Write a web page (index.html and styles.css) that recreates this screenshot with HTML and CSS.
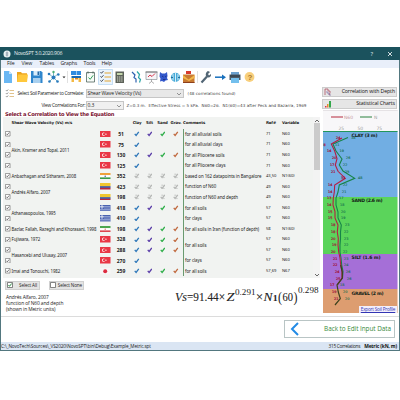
FILE: index.html
```html
<!DOCTYPE html>
<html lang="en">
<head>
<meta charset="utf-8">
<title>NovoSPT</title>
<link rel="stylesheet" href="styles.css">
</head>
<body>
<div class="window">
  <header class="titlebar">
    <svg class="app-icon" viewBox="0 0 10 10"><circle cx="5" cy="5" r="3.5" fill="#e9f3f3"/><path d="M5 2.5v5M3.7 4h2.6M3.7 6h2.6" stroke="#789" stroke-width=".7"/></svg>
    <span class="app-name">NovoSPT 3.0.2020.906</span>
    <span class="help">?</span>
    <svg class="close" viewBox="0 0 6 6"><path d="M1 1l4 4M5 1L1 5" stroke="#fff" stroke-width=".8"/></svg>
  </header>
  <nav class="menu"><span>File</span><span>View</span><span>Tables</span><span>Graphs</span><span>Tools</span><span>Help</span></nav>
  <svg class="toolbar" viewBox="0 0 400 18">
    <g>
      <path d="M4 3h5l3 3v9H4z" fill="#69b7f3"/><path d="M9 3v3h3z" fill="#c6e4fb"/>
      <path d="M17 4h4l1 1.3h5V14H17z" fill="#eda41d"/><path d="M18 6.5h10L27 14H17z" fill="#ffc83c"/>
      <path d="M31 3h10l1.5 1.5V15H31z" fill="#2f86cd"/><path d="M33.500 3h6v4.500h-6z" fill="#d8ecfa"/><path d="M37.500 3.500h1.500V7h-1.500z" fill="#2467a3"/><path d="M33 10h7.500v5H33z" fill="#a9d0ef"/>
      <path d="M53.500 9.500L49 6M53.500 9.500L58 6M53.500 9.500l-4 4M53.500 9.500l4 4M53.500 9.500V4" stroke="#4097a8" stroke-width=".7"/>
      <g fill="#2779bd"><circle cx="53.500" cy="9.500" r="2"/><circle cx="49" cy="6" r="1.300"/><circle cx="58.300" cy="6.500" r="1.300"/><circle cx="49.500" cy="13.500" r="1.300"/><circle cx="57.500" cy="13.500" r="1.300"/></g><circle cx="53.500" cy="4" r="1.200" fill="#4aaf75"/>
      <path d="M62.500 8.500h3l-1.500 1.800z" fill="#222"/>
      <path d="M67.500 3v12M197.500 3v12" stroke="#ccc" stroke-width=".6"/>
      <path d="M71 3h5v4h-5zM76.500 3h4.500v4h-4.500z" fill="#2f8be0"/><path d="M71.500 8h9.500v2h-9.500z" fill="#1769b5"/><path d="M71.500 10h2.500v4h-2.500zM78.500 10h2.500v4h-2.500z" fill="#f4b942"/><path d="M75 10h3v1.500h-3z" fill="#e38b22"/>
      <path d="M86.500 4.500h8V14h-8z" fill="#f7fbf8" stroke="#50665d" stroke-width=".8"/><path d="M88 3.500v2M93 3.500v2" stroke="#50665d"/><path d="M88.500 9.500l1.700 1.800 3-4" fill="none" stroke="#36a35d"/>
      <path d="M98.500 1.500h14v15h-14z" fill="#eaf4fd" stroke="#a5cbed" stroke-width=".6"/><path d="M104.500 5h6.500M104.500 9h6.500M104.500 13h6.500" stroke="#e4a534" stroke-width="1.100"/><path d="M100.500 4l1 1.300L103.500 3M100.500 8.200l1 1.300 2-2.300M100.500 12.300l1 1.300 2-2.300" fill="none" stroke="#3b4251" stroke-width=".9"/>
      <path d="M115.500 3.500h8.500v11.500h-8.500z" fill="#5d625a"/><path d="M117 5h5.500v2H117z" fill="#c5d7ac"/><path d="M117 9h5.500M117 11h5.500M117 13h5.500" stroke="#d7dccd" stroke-width="1" stroke-dasharray="1.300 .8"/>
      <path d="M132 4l3 3-1 2.500 2 1.500v3.500" fill="none" stroke="#2e62b0" stroke-width="1.200"/><path d="M137 3.500l2.500 3-1 3 2 2-1 3" fill="none" stroke="#2fa8a8" stroke-width="1.200"/>
      <path d="M146 4h11v7.500h-11z" fill="#f5f5f7" stroke="#8d949a" stroke-width=".7"/><path d="M145.500 4h12" stroke="#777"/><path d="M148 9l2-2 2 1.500 3-3" fill="none" stroke="#d7374e"/><path d="M151.500 11.500v2l-2.500 2M151.500 13.500l2.500 2" fill="none" stroke="#777" stroke-width=".6"/>
      <path d="M160 4l2 1.500h3l2-1.500.5 4-.5 2 1 2-2.500.5-1.500 1.500-2-1-2 .5.500-3-1-2z" fill="#3358cb"/><path d="M162 8l1.500 1M166.500 8l-1.500 1M163 11.500h2.500" stroke="#172c7c" stroke-width=".8"/>
      <circle cx="175.500" cy="9.300" r="4.600" fill="#45a9d8"/><path d="M175.500 5v9M173 6v6.500M178 6v6.500" stroke="#e5f6fc" stroke-width=".9"/><path d="M171 9.500h2M178 9.500h2" stroke="#226f9b"/>
      <path d="M186 3h5v3h-5z" fill="#d83b2e"/><path d="M183 6.500h11.500V15H183z" fill="#c87a32"/><path d="M183 7l5.500 4.500 6-4.500v3L189 13l-6-3z" fill="#f2b84a"/><path d="M183 14h11.500v1H183z" fill="#8c3f1c"/>
      <path d="M201.500 14.500l5.500-6" stroke="#526675" stroke-width="2.200"/><path d="M210 4l-2 2 1 1.500 2-1.500c.5 3-2 4-4 3s-1.500-5 1-6z" fill="#526675"/>
      <path d="M215 9.200h8" stroke="#1870bd" stroke-width="1.500"/><path d="M222 6.500l4 2.700-4 2.700z" fill="#1870bd"/>
      <path d="M231 4h8v3h-8z" fill="#6ba0ce"/><path d="M229.500 6.500h11V12h-11z" fill="#4d5b68"/><path d="M231 10h8v5h-8z" fill="#73bfed"/><path d="M230 8h10" stroke="#222f3b" stroke-width=".8"/>
      <circle cx="249.500" cy="9" r="4.900" fill="#f8cf7c"/>
    </g>
    <text x="247.500" y="12" class="help-glyph">?</text>
  </svg>

  <div class="filters">
    <div class="filter-rows">
      <div class="filter-row">
        <svg class="list-icon" viewBox="0 0 10 9"><path d="M4.500 1.500H9M4.500 4.500H9M4.500 7.500H9" stroke="#d4a95b" stroke-width=".7"/><path d="M1 1.200l.8.900L3.200.5M1 4.200l.8.900 1.400-1.600M1 7.200l.8.900 1.400-1.600" fill="none" stroke="#555" stroke-width=".6"/></svg>
        <label>Select Soil Parameter to Correlate:</label>
        <div class="select wide"><span>Shear Wave Velocity (Vs)</span><svg viewBox="0 0 6 4"><path d="M1 1l2 2 2-2" fill="none" stroke="#555" stroke-width=".6"/></svg></div>
        <span class="note found">(48 correlations found)</span>
      </div>
      <div class="filter-row">
        <label class="second">View Correlations For:</label>
        <div class="select narrow"><span>0.3</span><svg viewBox="0 0 6 4"><path d="M1 1l2 2 2-2" fill="none" stroke="#555" stroke-width=".6"/></svg></div>
        <span class="note">Z=0.3 m.&nbsp; Effective Stress = 5 kPa.&nbsp; N60=26.&nbsp; N1(60)=43 after Peck and Bazarra, 1969</span>
      </div>
    </div>
    <div class="side-buttons">
      <div class="side-button"><svg viewBox="0 0 8 8"><path d="M1 7V1h3v2h2v2l-1 2" fill="none" stroke="#b05464" stroke-width=".8"/><path d="M3 3v2h2v2h2" fill="none" stroke="#7b6aa0" stroke-width=".7"/></svg><span>Correlation with Depth</span></div>
      <div class="side-button"><svg viewBox="0 0 8 8"><path d="M1 6h1.500v1.500H1z" fill="#d34"/><path d="M3 4h1.500v3.500H3z" fill="#e78b2f"/><path d="M5 1h2v6.500H5z" fill="#35a84c"/></svg><span>Statistical Charts</span></div>
    </div>
  </div>

  <main class="content">
    <section class="left">
      <h1>Select a Correlation to View the Equation</h1>
      <div class="table-wrap">
        <div class="table" id="table"></div>
        <div class="scrollbar">
          <svg viewBox="0 0 6 4"><path d="M1 3l2-2 2 2" fill="none" stroke="#444" stroke-width=".8"/></svg>
          <div class="thumb"></div>
          <svg viewBox="0 0 6 4"><path d="M1 1l2 2 2-2" fill="none" stroke="#444" stroke-width=".8"/></svg>
        </div>
      </div>
      <div class="below">
        <div class="info">
          <div class="buttons">
            <div class="small-button"><svg viewBox="0 0 6 6"><path d="M.5.5h5v5h-5z" fill="#fff" stroke="#555" stroke-width=".7"/><path d="M1.500 3l1 1.300 2.200-2.800" fill="none" stroke="#2d8c46"/></svg><span>Select All</span></div>
            <div class="small-button none"><svg viewBox="0 0 6 6"><path d="M.5.5h5v5h-5z" fill="#fff" stroke="#555" stroke-width=".7"/></svg><span>Select None</span></div>
          </div>
          <p>Andrés Alfaro, 2007<br>function of N60 and depth<br>(shown in Metric units)</p>
        </div>
        <svg class="equation" viewBox="0 0 148 24">
          <g class="eq">
            <text x="0" y="19" textLength="12" class="it" lengthAdjust="spacingAndGlyphs">Vs</text>
            <text x="12" y="19" textLength="38" lengthAdjust="spacingAndGlyphs">=91.44×</text>
            <text x="51.500" y="19" textLength="8" class="it" lengthAdjust="spacingAndGlyphs">Z</text>
            <text x="60" y="13" textLength="20.500" class="sup" lengthAdjust="spacingAndGlyphs">0.291</text>
            <text x="81" y="19" textLength="7" lengthAdjust="spacingAndGlyphs">×</text>
            <text x="88.500" y="19" textLength="9" class="it" lengthAdjust="spacingAndGlyphs">N</text>
            <text x="98" y="19" textLength="4.500" class="one" lengthAdjust="spacingAndGlyphs">1</text>
            <text x="103" y="20" textLength="4" class="paren" lengthAdjust="spacingAndGlyphs">(</text>
            <text x="107.500" y="19" textLength="10.500" lengthAdjust="spacingAndGlyphs">60</text>
            <text x="118.500" y="20" textLength="4" class="paren" lengthAdjust="spacingAndGlyphs">)</text>
            <text x="123" y="11" textLength="20.500" class="sup" lengthAdjust="spacingAndGlyphs">0.298</text>
          </g>
        </svg>
      </div>
    </section>
    <aside class="chart">
      <svg viewBox="323 111 75 203" id="chart">
        <rect x="323" y="111" width="75" height="203" fill="#f8f7f9"/>
        <path d="M323 111.500h74.500" stroke="#d9d3d6" stroke-width=".6"/>
        <path d="M331 118h12" stroke="#b5283c"/><path d="M360 118h12" stroke="#28803c"/>
        <text x="344" y="120" class="leg red-leg">N60</text><text x="374" y="120" class="leg">N</text>
        <text x="338.500" y="130.500" class="leg">25</text><text x="357.500" y="130.500" class="leg">50</text><text x="376.500" y="130.500" class="leg">75</text>
        <rect x="323" y="132" width="74.500" height="66" fill="#71aee3"/>
        <rect x="323" y="198" width="74.500" height="57" fill="#5bd45b"/>
        <rect x="323" y="255" width="74.500" height="35" fill="#a56fd7"/>
        <rect x="323" y="290" width="74.500" height="24" fill="#dd9d70"/>
        <path d="M323 132.500h74.500" stroke="#23965b"/>
        <polyline fill="none" stroke="#168448" stroke-width="1.100" points="348,138.500 333,145 336,152 342,160 339.300,166 343,172 354.700,179.300 339.300,186 338,193 336,199 336,206 338,213 338,219 341.300,226 340.500,233 340.500,240 340,246 340,253 341,259 341.700,266 343,272.500 342.500,279 337.300,286"/>
        <polyline fill="none" stroke="#b51f42" stroke-width="1.100" points="342,139 331.300,145 334.700,152 337,159.700 335.300,166 338,172.300 345.300,179.300 334.700,186 334.300,193 333.300,199.300 333,206 335,212.500 335,219 338,226 337.300,233 338.300,239.500 338,246 338.700,253 340,259 340.700,266 342,272.500 342,279 337.300,286"/>
        <polyline fill="none" stroke="#3c421d" stroke-width="1.200" points="340.700,266 342.300,273 342.300,279 337,286 338.300,293 340.300,299.700 335,306"/>
        <g id="labels"></g>
        <text x="351.500" y="137.500" class="soil" textLength="26">CLAY (3 m)</text>
        <text x="351.500" y="203" class="soil" textLength="31">SAND (2.6 m)</text>
        <text x="351.500" y="260.300" class="soil" textLength="29">SILT (1.6 m)</text>
        <text x="351.500" y="295.500" class="soil" textLength="32">GRAVEL (2 m)</text>
      </svg>
      <a class="export">Export Soil Profile</a>
    </aside>
  </main>

  <footer class="actions">
    <div class="back"><svg viewBox="0 0 10 16"><path d="M8 2L2 8l6 6" fill="none" stroke="#228be6" stroke-width="2"/></svg><span>Back to Edit Input Data</span></div>
  </footer>
  <div class="status"><span class="path">C:\_NovoTech\Sources\_VS2020\NovoSPT\bin\Debug\Example_Metric.spt</span><span class="count">315 Correlations</span><b>Metric (kN, m)</b></div>
</div>
<script src="app.js"></script>
</body>
</html>
```
FILE: styles.css
```css
* { box-sizing: border-box; }
body { margin: 0; width: 400px; height: 400px; background: #fff; padding-top: 47px; overflow: hidden; font-family: "Open Sans", "Liberation Sans", sans-serif; font-size: 5px; line-height: 1; color: #222; white-space: nowrap; }
svg { display: block; flex: none; }
.window { width: 400px; height: 304px; border: solid #52777f; border-width: 0 1px 1px; display: flex; flex-direction: column; background: #fff; }
.titlebar { height: 13px; flex: none; background: #1b525d; color: #e6eff0; display: flex; align-items: center; margin: 0 -1px; padding: 0 7px 0 2px; }
.app-icon { width: 10px; height: 10px; }
.app-name { margin-left: 2px; font-size: 5.2px; letter-spacing: -.28px; flex: 1; }
.help { font-size: 6px; margin-right: 14px; }
.close { width: 6px; height: 6px; }
.menu { height: 8px; flex: none; background: #e9effa; display: flex; align-items: center; padding-left: 6px; font-size: 5.2px; letter-spacing: -.2px; }
.menu span:nth-child(1) { width: 14.500px; }
.menu span:nth-child(2) { width: 18px; }
.menu span:nth-child(3) { width: 21px; }
.menu span:nth-child(4) { width: 23px; }
.menu span:nth-child(5) { width: 18px; }
.toolbar { width: 400px; height: 18px; margin-left: -1px; }
.help-glyph { font: bold 8px "Liberation Sans", sans-serif; fill: #a9772f; }
.filters { height: 25px; flex: none; display: flex; padding: 1px 2px 0 4px; }
.filter-rows { width: 317px; padding-top: .5px; }
.filter-row { height: 12px; display: flex; align-items: center; }
.list-icon { width: 10px; height: 9px; margin-right: 2.500px; }
.filter-row label { width: 68px; flex: none; font-size: 4.8px; letter-spacing: -.3px; }
.filter-row label.second { width: 80.500px; padding-left: 36.500px; letter-spacing: -.24px; }
.select { height: 9px; flex: none; border: 1px solid #c6c6c6; background: #e8e8e8; display: flex; align-items: center; justify-content: space-between; padding: 0 1px; font-size: 5px; letter-spacing: -.11px; }
.select svg { width: 6px; height: 4px; }
.wide { width: 98px; }
.narrow { width: 38px; background: #f0f0f0; }
.note { margin-left: 3px; font: 4.1px "DejaVu Sans", sans-serif; letter-spacing: .01px; color: #444; }
.found { margin-left: 4px; letter-spacing: .05px; }
.side-buttons { width: 75px; display: flex; flex-direction: column; gap: 2px; }
.side-button { height: 10px; border: 1px solid #ccc; background: #e6e6e6; display: flex; align-items: center; justify-content: space-between; padding: 0 1px; font-size: 5.2px; letter-spacing: -.08px; color: #111; }
.side-button svg { width: 8px; height: 8px; }
.content { height: 205px; flex: none; display: flex; }
.left { width: 319px; margin-right: 3px; display: flex; flex-direction: column; }
h1 { margin: 0; height: 6px; padding-left: 4px; font: bold 5.2px/6px "DejaVu Sans", sans-serif; letter-spacing: -.29px; color: #7b1230; }
.table-wrap { height: 161px; margin-left: 2px; display: flex; background: #f1f3f1; }
.table { width: 310px; padding-left: 2px; display: grid; grid-template-columns: 6.500px 88.500px 11px 20px 12px 13px 13px 14px 83px 16px 31px; grid-template-rows: 11.700px repeat(14, 10.550px); font: 4.4px "Noto Sans", sans-serif; color: #222; }
.cell { display: flex; align-items: center; min-width: 0; line-height: 1; }
.cell.head { font: bold 3.9px "DejaVu Sans", sans-serif; letter-spacing: -.13px; }
.cell.author { letter-spacing: -.08px; }
.cell.num { font: bold 5px "Open Sans", sans-serif; justify-content: center; }
.cell.mark { justify-content: center; }
.cell.comment { padding-left: 1px; border-left: 1px solid #6a9a70; letter-spacing: -.05px; }
.cell.small { font-size: 4.1px; }
.cell svg.box { width: 5.500px; height: 5.500px; }
.cell svg.tick { width: 5.500px; height: 5.500px; }
.cell svg.flag { width: 10.500px; height: 6.500px; }
.scrollbar { width: 7px; background: #f3f3f3; display: flex; flex-direction: column; align-items: center; padding: 2px 0 1px; }
.scrollbar svg { width: 6px; height: 4px; }
.thumb { width: 6px; height: 47px; background: #cbcbcb; margin-bottom: auto; }
.below { display: flex; flex: 1; }
.info { width: 167px; flex: none; padding: 2.500px 0 0 4px; }
.buttons { display: flex; gap: 9px; }
.small-button { width: 35px; height: 9px; background: #e4e4e4; border: 1px solid #d0d0d0; display: flex; align-items: center; justify-content: space-between; padding: 0 2px 0 1px; font-size: 4.6px; letter-spacing: -.12px; }
.small-button.none { padding-left: 0; padding-right: 1px; }
.small-button svg { width: 6px; height: 6px; }
.info p { margin: 4.500px 0 0 1px; font-size: 4.9px; line-height: 6.200px; letter-spacing: -.11px; }
.equation { width: 148px; height: 24px; margin: 4px -3px 0 7px; flex: none; }
.eq { font: 11.5px "Liberation Serif", serif; fill: #222; stroke: #222; stroke-width: .1; }
.eq .it { font-style: italic; }
.eq .sup { font-size: 8px; stroke-width: 0; }
.eq .one { font-size: 8px; font-weight: bold; }
.eq .paren { font-size: 14px; stroke-width: 0; }
.chart { width: 75px; height: 203px; margin-top: -1px; position: relative; }
.chart svg { width: 75px; height: 203px; }
.leg { font: 4.5px "DejaVu Sans", sans-serif; fill: #a2a2a2; }
.red-leg { fill: #c99aa2; }
.soil { font: bold 4.6px "DejaVu Sans", sans-serif; fill: #142318; }
.lab { font: 3.4px "DejaVu Sans", sans-serif; }
.lab.l { fill: #a0163c; stroke: #a0163c; stroke-width: .2; }
.lab.r { fill: #146b4c; stroke: #146b4c; stroke-width: .1; }
.export { position: absolute; right: 1px; bottom: 0; width: 38px; height: 7px; background: #f3effb; color: #3235b4; text-decoration: underline; font-size: 4.6px; line-height: 6.500px; text-align: center; letter-spacing: -.18px; }
.actions { height: 26px; flex: none; border-top: 1px solid #dcdcdc; display: flex; justify-content: flex-end; padding: 3px 4px 0 0; }
.back { width: 111px; height: 18px; border: 1px solid #b9c5c5; display: flex; align-items: center; justify-content: space-between; padding: 0 3px 0 5px; color: #378a3b; font-size: 6.4px; letter-spacing: -.05px; }
.back svg { width: 10px; height: 16px; }
.status { height: 8px; flex: none; background: #dae5f3; display: flex; align-items: center; font-size: 4.7px; letter-spacing: -.28px; padding-right: 2px; }
.path { flex: 1; letter-spacing: -.14px; }
.count { margin-right: 4px; }
.status b { color: #111; font-size: 4.9px; letter-spacing: -.15px; }
```
FILE: app.js
```js
const flags = {
  tr: '<rect width="10.500" height="6.500" fill="#e93746"/><circle cx="3.700" cy="3.200" r="1.700" fill="#fff"/><circle cx="4.200" cy="3.200" r="1.300" fill="#e93746"/><circle cx="6" cy="3.200" r=".6" fill="#fff"/>',
  in: '<rect width="10.500" height="2.200" fill="#efa13a"/><rect y="2.200" width="10.500" height="2.200" fill="#fff"/><rect y="4.400" width="10.500" height="2.100" fill="#3b9b48"/><circle cx="5.200" cy="3.200" r=".8" fill="#5560a8"/>',
  co: '<rect width="10.500" height="3.300" fill="#f0c52e"/><rect y="3.200" width="10.500" height="1.700" fill="#34509c"/><rect y="4.800" width="10.500" height="1.700" fill="#b8283c"/>',
  gr: '<rect width="10.500" height="6.500" fill="#4a62b0"/><path d="M4 1.500h6.500M4 3h6.500M0 4.500h10.500M0 6h10.500" stroke="#b9c4e6" stroke-width=".6"/><path d="M0 1.800h4M2 0v3.800" stroke="#fff" stroke-width=".8"/>',
  ir: '<rect width="10.500" height="2.200" fill="#4da650"/><rect y="2.200" width="10.500" height="2.200" fill="#fff"/><rect y="4.400" width="10.500" height="2.100" fill="#dc4650"/><circle cx="5.200" cy="3.200" r=".6" fill="#dc4650"/>',
  jp: '<rect width="10.500" height="6.500" fill="#f8f6f6"/><circle cx="5.200" cy="3.200" r="2" fill="#dd2b40"/>'
};
const rows = [
  ['tr', 51, 'all', '71', 'N60'], ['tr', 75, 'clay', '71', 'N60'], ['tr', 130, 'all', '71', 'N60'],
  ['tr', 125, 'clay', '71', 'N60'], ['in', 352, 'gray', '43,50', 'N1(60)'], ['co', 423, 'gray', '49', 'N60'],
  ['co', 198, 'gray', '49', 'N60'], ['gr', 418, 'all', '57', 'N60'], ['gr', 410, 'clay', '57', 'N60'],
  ['ir', 198, 'all', '58', 'N1(60)'], ['tr', 328, 'all', '57', 'N60'], ['tr', 288, 'all', '57', 'N60'],
  ['tr', 270, 'clay', '57', 'N60'], ['jp', 259, 'all', '57,69', 'N67']
];
const authors = [['Akin, Kramer and Topal, 2011', 4], ['Anbazhagan and Sitharam, 2008', 1], ['Andrés Alfaro, 2007', 2],
  ['Athanasopoulos, 1995', 2], ['Bazlar, Fallah, Razeghi and Khorasani, 1998', 1], ['Fujiwara, 1972', 1],
  ['Hasancebi and Ulusay, 2007', 2], ['Imai and Tonouchi, 1982', 1]];
const comments = [['for all alluvial soils', 1], ['for all alluvial clays', 1], ['for all Pliocene soils', 1],
  ['for all Pliocene clays', 1], ['based on 162 datapoints in Bangalore', 1], ['function of N60', 1],
  ['function of N60 and depth', 1], ['for all soils', 1], ['for clays', 1], ['for all soils in Iran (function of depth)', 1],
  ['for all soils', 2], ['for clays', 1], ['for all soils', 1]];
const colors = ['#2f78b9', '#5a3da8', '#2fae4a', '#c0693e'];
let out = '';
function cell(col, row, span, cls, body) {
  out += `<div class="cell ${cls}" style="grid-area:${row}/${col}/span ${span}/span 1">${body}</div>`;
}
['', 'Shear Wave Velocity (Vs) m/s', '', '', 'Clay', 'Silt', 'Sand', 'Grav.', 'Comments', 'Ref#', 'Variable']
  .forEach((t, i) => t && cell(i + 1, 1, 1, 'head' + (i > 3 && i < 8 ? ' mark' : ''), t));
rows.forEach(([flag, num, mode, ref, variable], i) => {
  const r = i + 2;
  cell(1, r, 1, '', '<svg class="box" viewBox="0 0 6 6"><path d="M.5.5h5v5h-5z" fill="#fff" stroke="#555" stroke-width=".6"/><path d="M1.500 3l1 1.200 2-2.500" fill="none" stroke="#333" stroke-width=".7"/></svg>');
  cell(3, r, 1, '', `<svg class="flag" viewBox="0 0 10.500 6.500">${flags[flag]}</svg>`);
  cell(4, r, 1, 'num', num);
  colors.forEach((c, k) => {
    if (mode === 'clay' && k) return;
    const gray = mode === 'gray';
    cell(5 + k, r, 1, 'mark', `<svg class="tick" viewBox="0 0 6 6"><path d="M.8 3.200l1.500 1.700L5.200 1" fill="none" stroke="${gray ? '#b4b6b4' : c}" stroke-width="1.400"/>${gray ? '<path d="M1.500 1.300h2M3.500 5h1.500" stroke="#b4b6b4" stroke-width=".8"/>' : ''}</svg>`);
  });
  cell(10, r, 1, 'small', ref);
  cell(11, r, 1, 'small', variable);
});
let at = 2;
authors.forEach(([t, n]) => { cell(2, at, n, 'author', t); at += n; });
at = 2;
comments.forEach(([t, n]) => { cell(9, at, n, 'comment', t); at += n; });
document.getElementById('table').innerHTML = out;

const labels = [[24, 38, 336, 351], [8, 11, 323.5, 335], [14, 19, 327, 339.5], [20, 26, 332, 346], [17, 22, 330, 343],
  [21, 25, 331, 345], [31, 48, 341, 358], [14, 22, 328, 343], [14, 21, 328, 342], [13, 17, 327, 339], [14, 18, 327, 340],
  [15, 20, 328, 341], [15, 19, 328, 341], [18, 23, 331, 345], [18, 22, 331, 344], [20, 23, 331, 344], [19, 22, 332, 344],
  [20, 22, 331, 343], [21, 23, 333, 344], [22, 24, 333, 344], [24, 26, 335, 346], [25, 26, 336, 347],
  [17, 18, 330, 340], [19, 20, 332, 343], [21, 20, 334, 345]];
document.getElementById('labels').innerHTML = labels.map(([a, b, x, y], i) => {
  const top = 140 + i * 6.7;
  return `<text class="lab l" x="${x}" y="${top}">${a}</text><text class="lab r" x="${y}" y="${top}">${b}</text>`;
}).join('');
```
